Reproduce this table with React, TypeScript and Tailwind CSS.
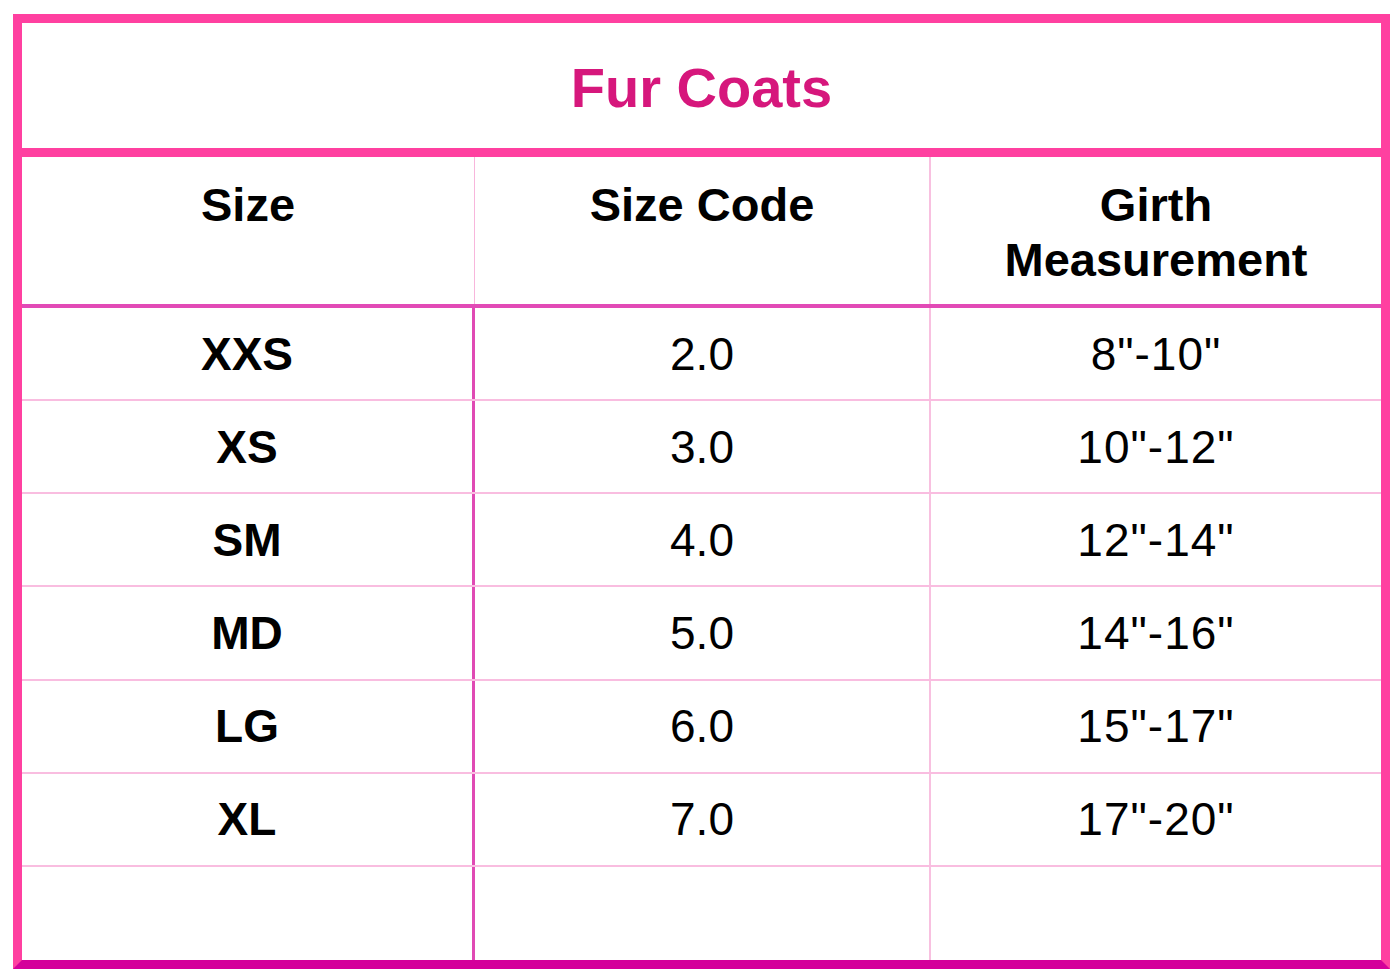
const rows = [
  { size: "XXS", code: "2.0", girth: '8"-10"' },
  { size: "XS", code: "3.0", girth: '10"-12"' },
  { size: "SM", code: "4.0", girth: '12"-14"' },
  { size: "MD", code: "5.0", girth: '14"-16"' },
  { size: "LG", code: "6.0", girth: '15"-17"' },
  { size: "XL", code: "7.0", girth: '17"-20"' },
  { size: "", code: "", girth: "" },
];

export default function App() {
  return (
    <main
      className="w-[1400px] h-[980px] bg-white pl-[13px] pt-[14px]"
      style={{ fontFamily: '"Liberation Sans", Arial, Helvetica, sans-serif' }}
    >
      <div className="w-[1377px] h-[955px] border-[9px] border-[#ff40a0] border-b-[#d4009a] flex flex-col">
        {/* TITLE */}
        <div className="h-[134px] shrink-0 border-b-[9px] border-[#ff40a0] flex items-center justify-center pt-[4px]">
          <h1 className="text-[56px] font-bold text-[#d6177c] leading-none">Fur Coats</h1>
        </div>

        {/* HEADER */}
        <div className="grid grid-cols-[453px_456px_1fr] h-[151px] shrink-0 border-b-[4px] border-[#e24ab6]">
          <div className="border-r border-[#f8b6dc] text-center pt-[20px] text-[47px] font-bold leading-[55px] text-black">
            Size
          </div>
          <div className="border-r-2 border-[#f8c0e0] text-center pt-[20px] text-[47px] font-bold leading-[55px] text-black">
            Size Code
          </div>
          <div className="text-center pt-[20px] text-[47px] font-bold leading-[55px] text-black">
            Girth
            <br />
            Measurement
          </div>
        </div>

        {/* BODY */}
        <div className="flex-1 grid grid-rows-7">
          {rows.map((r, i) => (
            <div
              key={i}
              className={`grid grid-cols-[453px_456px_1fr] ${i < rows.length - 1 ? "border-b-2 border-[#f9bde0]" : ""}`}
            >
              <div className="border-r-[3px] border-[#e04ab4] flex items-center justify-center text-[46px] font-bold text-black leading-none">
                {r.size}
              </div>
              <div className="border-r-2 border-[#f8c0e0] flex items-center justify-center text-[46px] text-black leading-none">
                {r.code}
              </div>
              <div className="flex items-center justify-center text-[46px] tracking-[1px] text-black leading-none">
                {r.girth}
              </div>
            </div>
          ))}
        </div>
      </div>
    </main>
  );
}
